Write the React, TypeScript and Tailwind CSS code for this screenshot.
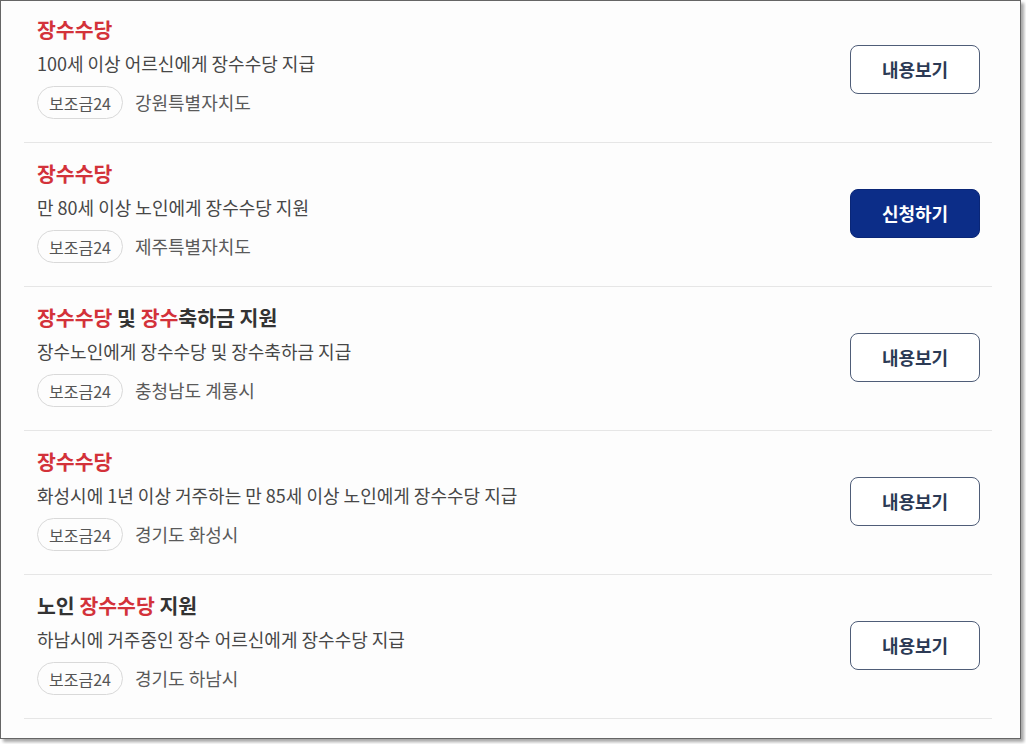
import React from "react";

type Part = { t: string; red?: boolean };
type Item = { title: Part[]; desc: string; region: string; apply?: boolean };

const items: Item[] = [
  { title: [{ t: "장수수당", red: true }], desc: "100세 이상 어르신에게 장수수당 지급", region: "강원특별자치도" },
  { title: [{ t: "장수수당", red: true }], desc: "만 80세 이상 노인에게 장수수당 지원", region: "제주특별자치도", apply: true },
  {
    title: [{ t: "장수수당", red: true }, { t: " 및 " }, { t: "장수", red: true }, { t: "축하금 지원" }],
    desc: "장수노인에게 장수수당 및 장수축하금 지급",
    region: "충청남도 계룡시",
  },
  { title: [{ t: "장수수당", red: true }], desc: "화성시에 1년 이상 거주하는 만 85세 이상 노인에게 장수수당 지급", region: "경기도 화성시" },
  {
    title: [{ t: "노인 " }, { t: "장수수당", red: true }, { t: " 지원" }],
    desc: "하남시에 거주중인 장수 어르신에게 장수수당 지급",
    region: "경기도 하남시",
  },
];

export default function App() {
  return (
    <div
      className="w-[1026px] h-[744px] bg-white overflow-hidden"
      style={{ fontFamily: '"Noto Sans CJK KR", "Noto Sans", sans-serif' }}
    >
      <div className="w-[1021px] h-[739px] border border-[#666666] bg-[#fdfdfd] shadow-[3px_3px_3px_rgba(0,0,0,0.35)] overflow-hidden">
        <div className="ml-[23px] w-[968px] flex flex-col">
          {items.map((it, i) => (
            <div
              key={i}
              className={`flex items-center justify-between border-b border-[#e6e6e6] pl-[13px] pr-[12px] ${
                i === 0 ? "pt-[14px] pb-[23px]" : "pt-[16px] pb-[23px]"
              }`}
            >
              <div className="flex flex-col">
                <div className="text-[20.5px] leading-[28px] font-bold text-[#333333]">
                  {it.title.map((p, j) => (
                    <span key={j} className={p.red ? "text-[#d3323a]" : ""}>
                      {p.t}
                    </span>
                  ))}
                </div>
                <div className="mt-[7px] text-[18px] leading-[26px] text-[#474747]">{it.desc}</div>
                <div className="mt-[10px] flex items-center gap-[12px]">
                  <span className="h-[33px] px-[11px] rounded-full border border-[#d9d9d9] flex items-center text-[16px] text-[#555555]">
                    보조금24
                  </span>
                  <span className="text-[18px] text-[#5a5a5a]">{it.region}</span>
                </div>
              </div>
              {it.apply ? (
                <button className="mt-[4px] w-[130px] h-[49px] rounded-[8px] bg-[#0c2d88] border border-[#0a2677] text-white text-[18px] font-bold">
                  신청하기
                </button>
              ) : (
                <button className="mt-[4px] w-[130px] h-[49px] rounded-[8px] bg-white border border-[#4f5d78] text-[#2c3a55] text-[18px] font-bold">
                  내용보기
                </button>
              )}
            </div>
          ))}
        </div>
      </div>
    </div>
  );
}
